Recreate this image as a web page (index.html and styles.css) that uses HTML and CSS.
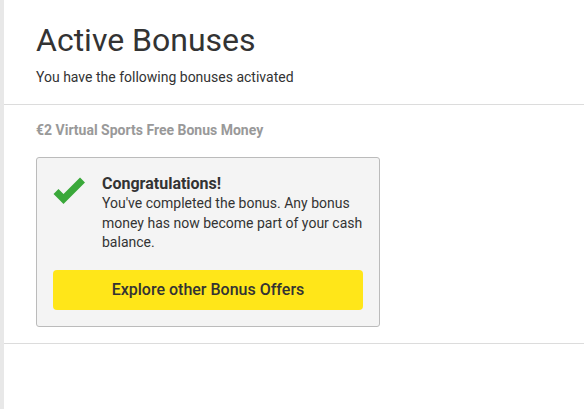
FILE: index.html
```html
<!DOCTYPE html>
<html>
<head>
<meta charset="utf-8">
<link rel="stylesheet" href="styles.css">
</head>
<body>
<div class="layout">
  <div class="rail"></div>
  <main class="main">
    <header class="header">
      <h1 class="title">Active Bonuses</h1>
      <p class="subtitle">You have the following bonuses activated</p>
    </header>
    <section class="bonus">
      <h2 class="bonus-name">€2 Virtual Sports Free Bonus Money</h2>
      <div class="card">
        <div class="card-body">
          <svg class="check" width="33" height="28" viewBox="0 0 33 28">
            <path d="M3 14.5 L10.5 22 L29.5 3" fill="none" stroke="#3aa83a" stroke-width="7" stroke-linejoin="miter"/>
          </svg>
          <div class="message">
            <div class="msg-title">Congratulations!</div>
            <div class="msg-text">You've completed the bonus. Any bonus money has now become part of your cash balance.</div>
          </div>
        </div>
        <button class="cta">Explore other Bonus Offers</button>
      </div>
    </section>
  </main>
</div>
</body>
</html>
```

FILE: styles.css
```css
html, body {
  margin: 0;
  padding: 0;
  background: #fff;
  height: 100%;
}
body {
  font-family: Roboto, "Liberation Sans", sans-serif;
  color: #333;
}
.layout {
  display: flex;
  min-height: 100%;
}
.rail {
  width: 4px;
  flex: none;
  background: #e8e8e8;
}
.main {
  flex: 1;
}
.header {
  padding: 20px 32px 0;
  height: 84px;
  border-bottom: 1px solid #dcdcdc;
}
.title {
  margin: 0;
  font-size: 32px;
  font-weight: 400;
  line-height: 40px;
  color: #333;
}
.subtitle {
  margin: 8px 0 0;
  font-size: 14px;
  line-height: 18px;
  color: #333;
}
.bonus {
  padding: 16px 32px 16px;
  border-bottom: 1px solid #dcdcdc;
}
.bonus-name {
  margin: 0;
  font-size: 14px;
  font-weight: 700;
  line-height: 18px;
  color: #999;
}
.card {
  margin-top: 18px;
  width: 344px;
  box-sizing: border-box;
  background: #f4f4f4;
  border: 1px solid #bbb;
  border-radius: 3px;
  padding: 16px;
}
.card-body {
  display: flex;
  gap: 16px;
}
.check {
  flex: none;
  margin-top: 3px;
}
.message {
  flex: 1;
}
.msg-title {
  font-size: 16px;
  font-weight: 700;
  line-height: 20px;
  color: #333;
}
.msg-text {
  font-size: 14px;
  line-height: 19.5px;
  color: #333;
}
.cta {
  display: block;
  width: 100%;
  margin-top: 17px;
  height: 40px;
  border: none;
  border-radius: 4px;
  background: #ffe619;
  font-family: Roboto, "Liberation Sans", sans-serif;
  font-size: 16px;
  font-weight: 500;
  color: #333;
  cursor: pointer;
}
```
